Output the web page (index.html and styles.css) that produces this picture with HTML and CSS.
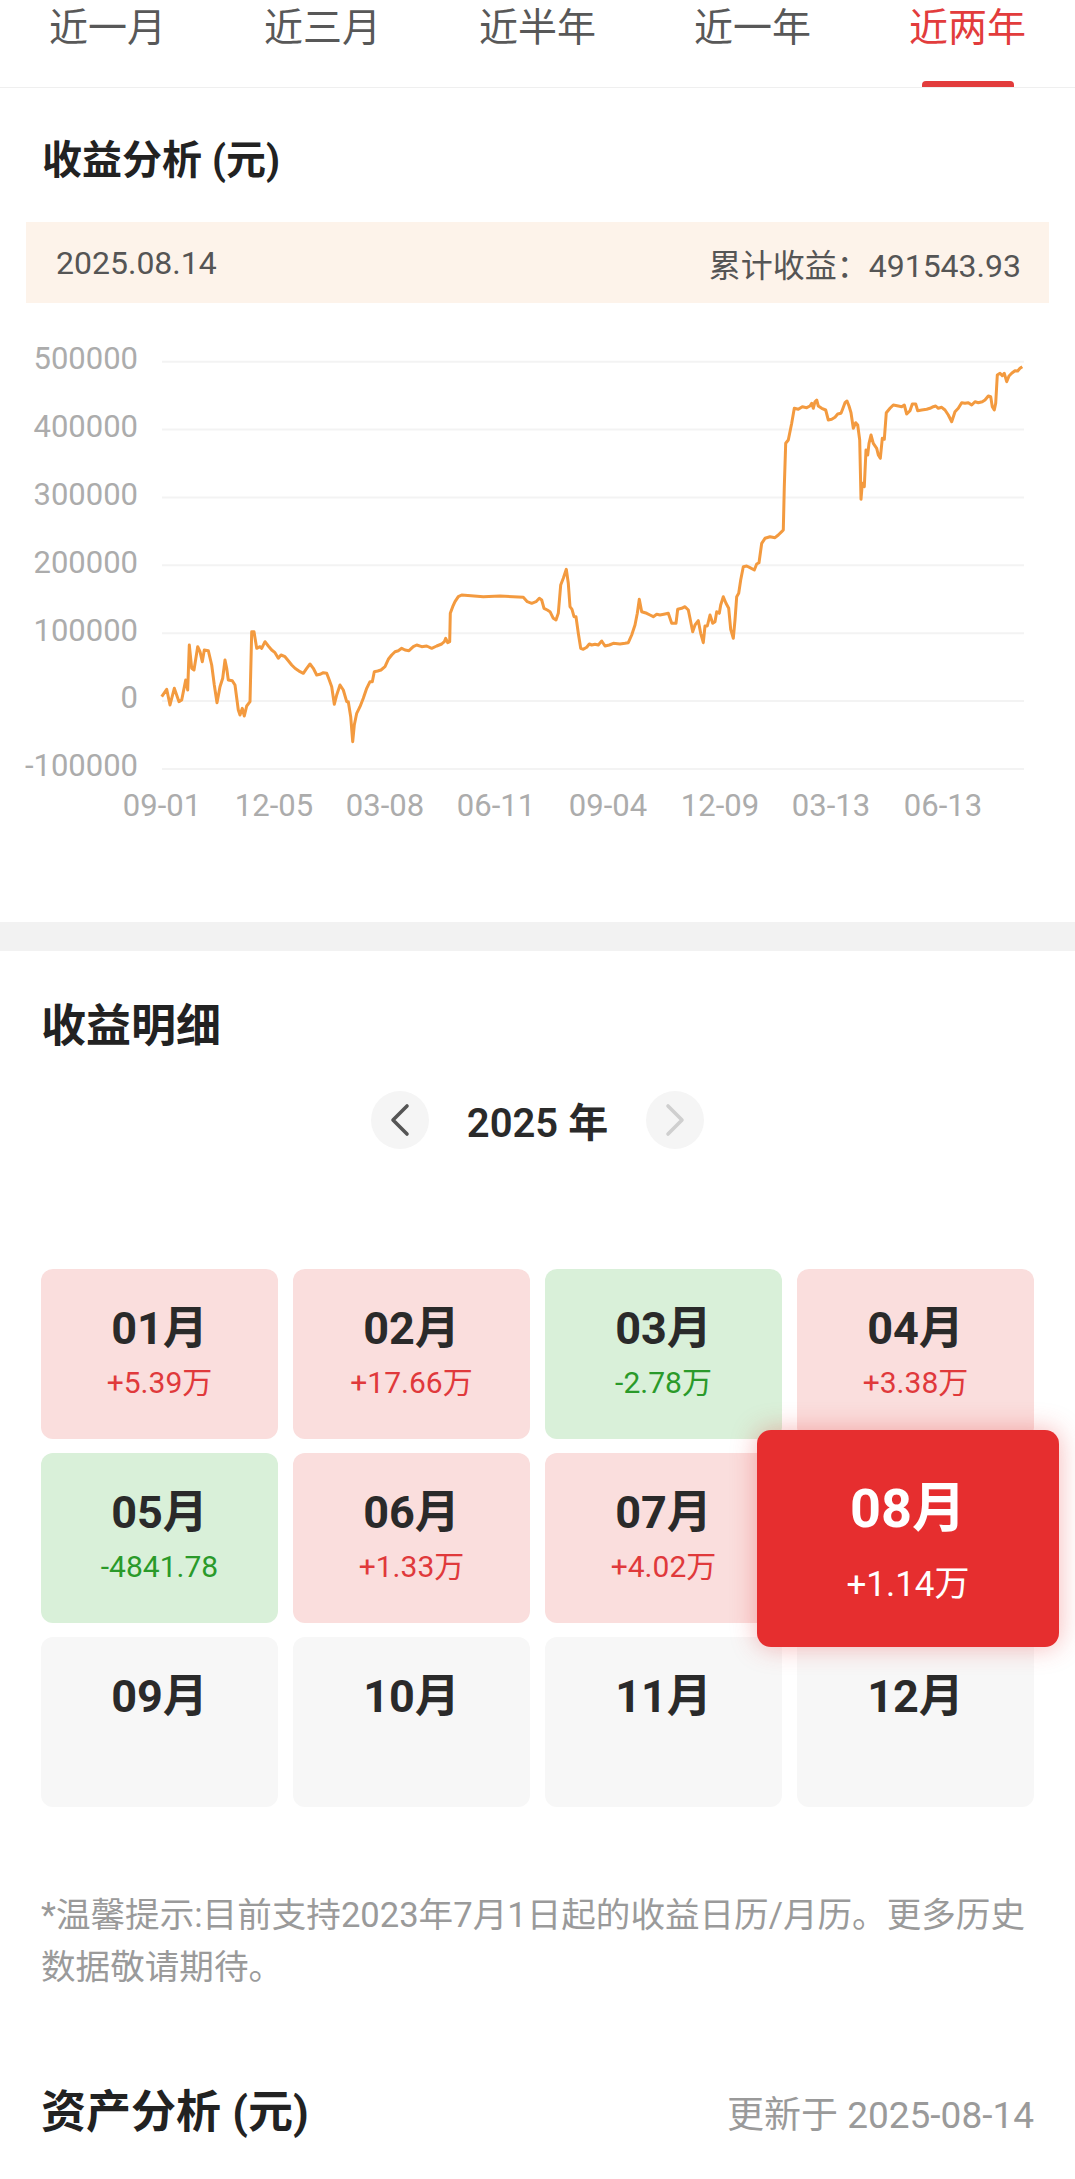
FILE: index.html
```html
<!DOCTYPE html>
<html lang="zh-CN">
<head>
    <meta charset="UTF-8">
    <meta name="viewport" content="width=device-width, initial-scale=1.0">
    <title>收益分析</title>
    <link rel="stylesheet" href="styles.css">
</head>
<body>
    <div class="tabs">
        <div class="tab">近一月</div>
        <div class="tab">近三月</div>
        <div class="tab">近半年</div>
        <div class="tab">近一年</div>
        <div class="tab active">近两年</div>
    </div>

    <section class="profit">
        <h2 class="title-sm">收益分析 (元)</h2>
        <div class="date-bar">
            <span>2025.08.14</span>
            <span>累计收益：491543.93</span>
        </div>
        <svg class="chart" width="1075" height="619" viewBox="0 303 1075 619">
            <!-- 网格线 -->
            <g class="grid">
                <line x1="162" y1="361.7" x2="1024" y2="361.7"/>
                <line x1="162" y1="429.6" x2="1024" y2="429.6"/>
                <line x1="162" y1="497.5" x2="1024" y2="497.5"/>
                <line x1="162" y1="565.3" x2="1024" y2="565.3"/>
                <line x1="162" y1="633.2" x2="1024" y2="633.2"/>
                <line x1="162" y1="701.1" x2="1024" y2="701.1"/>
                <line x1="162" y1="769" x2="1024" y2="769"/>
            </g>
            <g class="y-labels">
                <text x="138" y="369">500000</text>
                <text x="138" y="437">400000</text>
                <text x="138" y="505">300000</text>
                <text x="138" y="573">200000</text>
                <text x="138" y="641">100000</text>
                <text x="138" y="708">0</text>
                <text x="138" y="776">-100000</text>
            </g>
            <g class="x-labels">
                <text x="162" y="816">09-01</text>
                <text x="274" y="816">12-05</text>
                <text x="385" y="816">03-08</text>
                <text x="496" y="816">06-11</text>
                <text x="608" y="816">09-04</text>
                <text x="720" y="816">12-09</text>
                <text x="831" y="816">03-13</text>
                <text x="943" y="816">06-13</text>
            </g>
            <polyline class="line" points="
                161.7,696.7 166.7,689.3 170,705 174.3,688.3 179,701.7 181.7,700 185.7,680 187.7,690 189.3,645 191.7,668.3
                194,670 197.7,646.7 200,651.7 202.3,661.7 204.3,650 208.3,650.7 211.7,665 214.3,685 217,702.7 220,686.7
                222.7,678.3 225,660 226.7,668.3 228.3,680 232.3,680.7 235,685 238.3,710 240,715 242.3,708.3 244.3,716
                246.7,706 250,701.7 251.7,631.7 254,631.7 256.7,648.3 260,646.7 261.7,648.3 265,641.7 268.3,646 271.7,650
                275,652.7 278.3,658.3 281,655 285,656.7 288.3,660.7 291.7,665 295,668.3 300,671.7 303.3,673.3 306.7,668.3
                310,664 313.3,668.3 316.7,675 320,674.3 323.3,672.7 326.7,673.3 329,679.3 331.7,686.7 334.3,704.3 336.7,695
                340,685 343.3,690 346.7,701.7 348.3,701.7 350.7,716.7 352.7,741.7 354.3,725 356.7,713.3 360,706.7 363.3,698.3
                366.7,688.3 370,681.7 372.3,681.7 374.3,671.7 377.7,671 381,670 385,666.7 388.3,659.3 391.7,655 395,651.7
                398.3,650.7 401.7,648.3 405,650 409,650.7 413.3,646.7 416.7,645 421.7,646.7 426.7,646 431.7,648.3 436.7,646
                441.7,644 444.3,641.7 445.7,638.3 447.7,642.7 449.7,641.7 450.3,613.3 452.7,606.7 455,601.7 458.3,596.7 461.7,595
                483.3,596.7 500,596 523.3,597.3 527.3,601.7 531.7,603.3 536,601.7 539.3,598.3 541.7,600 544,608.3 547.3,610
                550,611.7 553.3,618.3 556,620 558.3,613.3 560.7,585 563.3,578.3 566.3,569.3 568.3,583.3 570,606.7 572,609.3
                574,616.7 576,616.7 578.3,633.3 580.7,648.3 583.3,649.3 586.7,647.3 589.3,644 591.7,645 595,644.3 598.3,645
                601.7,641 605,646 609.3,645 613.3,643.3 620,644 625,643.3 628.3,642.7 631.7,635 635,625 637.3,613.3
                639.3,599.3 641.7,611.7 646.7,613.3 650,615 653.3,616.7 656.7,614.3 660,615 665,614 668.3,613.3 671.7,623.3
                676,623.3 677.7,609.3 681.7,608.3 685,606.7 688.3,610 690,618.3 692.7,631.7 695,625 698.3,620.7 700.7,633.3
                703.3,642.7 705,626 707.3,626 710,615 712.7,623.3 715,621.7 716.7,611.7 719.3,613.3 720.7,605 723.3,596.7
                726,603.3 728.7,608.3 730.7,629.3 733.3,638.3 735,620 736.7,596.7 738.7,593.3 740.7,580 743.3,566.7 746.7,566
                750,567.7 754.3,570 756.7,564 759,562.7 761.7,543.3 765,538.3 770,536.7 775,537.7 778.3,535 781.7,531.7
                783.3,530 784.3,486.7 785.7,443.3 788.3,440 791.7,423.3 794.3,408.3 798.3,409.3 802.3,406.7 806.7,407.7 810,406
                811.7,403.3 813.3,408.3 815,401.7 816.7,400 818.3,406 821.7,408.3 825.7,410 828.3,420 831.7,419.3 835,417.3
                837.7,414 841,413.3 842.3,410 845,402.7 847,401 849,406 851,412.7 853.3,428.3 855.7,422.7 857.7,425
                859.7,440 861,499.3 862.3,483.3 864.3,486.7 866,450 867.7,455 869,443.3 871,435 873.3,443.3 876.7,448.3
                878.3,455 880.3,458.3 882.3,438.3 884.3,439.3 886.3,412.7 890,408.3 893.3,405 898.3,406 901.7,406.7 904.3,405
                906.7,414 910,410.7 912.3,404 915.7,404 917.7,410.7 921.7,410 926.7,409.3 930,408.3 933.3,406.7 935.7,406
                938.3,408.3 941.7,407.3 945,410 948.3,415 951.7,421.7 955,411.7 958.3,408.3 961.7,402.7 965,403.3 968.3,402.7
                971.7,405 975,401.7 978.3,402.7 982.3,401.7 985,400 988.3,396 990.7,396.7 992.3,406.7 994.3,410 995.7,403.3
                997.3,375 1000,373.3 1002.3,375.7 1004.3,373.3 1006.7,381.7 1009,376 1011.7,373.3 1015,370.7 1017.7,371 1020,368.3
                1022.3,366.7"/>
        </svg>
    </section>

    <div class="band"></div>

    <section class="detail">
        <h2 class="title">收益明细</h2>
        <div class="year-nav">
            <button class="nav-btn" type="button">
                <svg width="58" height="58" viewBox="0 0 58 58"><path d="M36 15 L22 29 L36 43" stroke="#555" /></svg>
            </button>
            <span class="year">2025 年</span>
            <button class="nav-btn" type="button">
                <svg width="58" height="58" viewBox="0 0 58 58"><path d="M22 15 L36 29 L22 43" stroke="#cfcfcf" /></svg>
            </button>
        </div>

        <div class="months">
            <div class="month up"><div class="m">01月</div><div class="v">+5.39万</div></div>
            <div class="month up"><div class="m">02月</div><div class="v">+17.66万</div></div>
            <div class="month down"><div class="m">03月</div><div class="v">-2.78万</div></div>
            <div class="month up"><div class="m">04月</div><div class="v">+3.38万</div></div>
            <div class="month down"><div class="m">05月</div><div class="v">-4841.78</div></div>
            <div class="month up"><div class="m">06月</div><div class="v">+1.33万</div></div>
            <div class="month up"><div class="m">07月</div><div class="v">+4.02万</div></div>
            <div class="month selected"><div class="m">08月</div><div class="v">+1.14万</div></div>
            <div class="month"><div class="m">09月</div></div>
            <div class="month"><div class="m">10月</div></div>
            <div class="month"><div class="m">11月</div></div>
            <div class="month"><div class="m">12月</div></div>
        </div>

        <p class="tip">*温馨提示:目前支持2023年7月1日起的收益日历/月历。更多历史数据敬请期待。</p>

        <div class="asset-head">
            <h2 class="title">资产分析 (元)</h2>
            <span class="updated">更新于 2025-08-14</span>
        </div>
    </section>
</body>
</html>
```

FILE: styles.css
```css
body {
    margin: 0;
    width: 1075px;
    background-color: #fff;
    font-family: Roboto, "Noto Sans CJK SC", sans-serif;
    color: #222;
}

/* 顶部时间切换 */
.tabs {
    display: flex;
    height: 87px;
    border-bottom: 1px solid #efefef;
}

.tab {
    flex: 1;
    position: relative;
    text-align: center;
    font-size: 39px;
    line-height: 56px;
    color: #585858;
}

.tab.active {
    color: #e23c3c;
}

.tab.active::after {
    content: "";
    position: absolute;
    left: 50%;
    bottom: 0;
    width: 92px;
    height: 6px;
    margin-left: -46px;
    border-radius: 4px 4px 0 0;
    background-color: #e23c3c;
}

.title-sm {
    margin: 47px 0 0 42px;
    font-size: 40px;
    line-height: 52px;
    font-weight: 700;
    color: #222;
}

.date-bar {
    display: flex;
    justify-content: space-between;
    align-items: center;
    height: 81px;
    margin: 35px 26px 0;
    padding: 0 28px 0 30px;
    background-color: #fdf3ea;
    font-size: 32px;
    color: #555;
}

.chart {
    display: block;
}

.grid line {
    stroke: #f3f3f3;
    stroke-width: 2;
}

.y-labels text {
    text-anchor: end;
    font-size: 31px;
    fill: #acacac;
}

.x-labels text {
    text-anchor: middle;
    font-size: 31px;
    fill: #acacac;
}

.line {
    fill: none;
    stroke: #f39a3f;
    stroke-width: 3;
    stroke-linejoin: round;
}

.band {
    height: 29px;
    background-color: #f2f2f2;
}

.detail {
    padding: 48px 41px 40px;
}

.title {
    margin: 0;
    font-size: 45px;
    line-height: 56px;
    font-weight: 700;
    color: #222;
}

/* 年份切换 */
.year-nav {
    display: flex;
    justify-content: center;
    align-items: center;
    gap: 38px;
    margin-top: 36px;
}

.nav-btn {
    width: 58px;
    height: 58px;
    padding: 0;
    border: none;
    border-radius: 50%;
    background-color: #f5f5f5;
}

.nav-btn svg {
    display: block;
}

.nav-btn path {
    fill: none;
    stroke-width: 3.6;
    stroke-linecap: round;
    stroke-linejoin: round;
}

.year {
    font-size: 40px;
    font-weight: 600;
    color: #2a2a2a;
}

/* 月份格子 */
.months {
    display: grid;
    grid-template-columns: repeat(4, 1fr);
    gap: 14px 15px;
    margin-top: 120px;
}

.month {
    height: 170px;
    box-sizing: border-box;
    padding-top: 35px;
    border-radius: 12px;
    background-color: #f7f7f7;
    text-align: center;
}

.month .m {
    font-size: 45px;
    line-height: 50px;
    font-weight: 700;
    color: #2a2a2a;
}

.month .v {
    margin-top: 9px;
    font-size: 30px;
    line-height: 40px;
}

.month.up {
    background-color: #fadedd;
}

.month.up .v {
    color: #e0393b;
}

.month.down {
    background-color: #d9f0d9;
}

.month.down .v {
    color: #2a9a2a;
}

.month.selected {
    position: relative;
    z-index: 1;
    height: auto;
    margin: -23px -25px -24px -40px;
    padding-top: 49px;
    border-radius: 14px;
    background-color: #e62e2f;
    box-shadow: 0 0 26px rgba(230, 46, 47, 0.35);
}

.month.selected .m {
    font-size: 54px;
    line-height: 60px;
    color: #fff;
}

.month.selected .v {
    margin-top: 24px;
    font-size: 35px;
    line-height: 44px;
    color: #fff;
}

.tip {
    margin: 82px 0 0;
    font-size: 34.6px;
    line-height: 52px;
    color: #9a9a9a;
}

.asset-head {
    display: flex;
    justify-content: space-between;
    align-items: baseline;
    margin-top: 92px;
}

.updated {
    font-size: 37px;
    color: #9a9a9a;
}
```
